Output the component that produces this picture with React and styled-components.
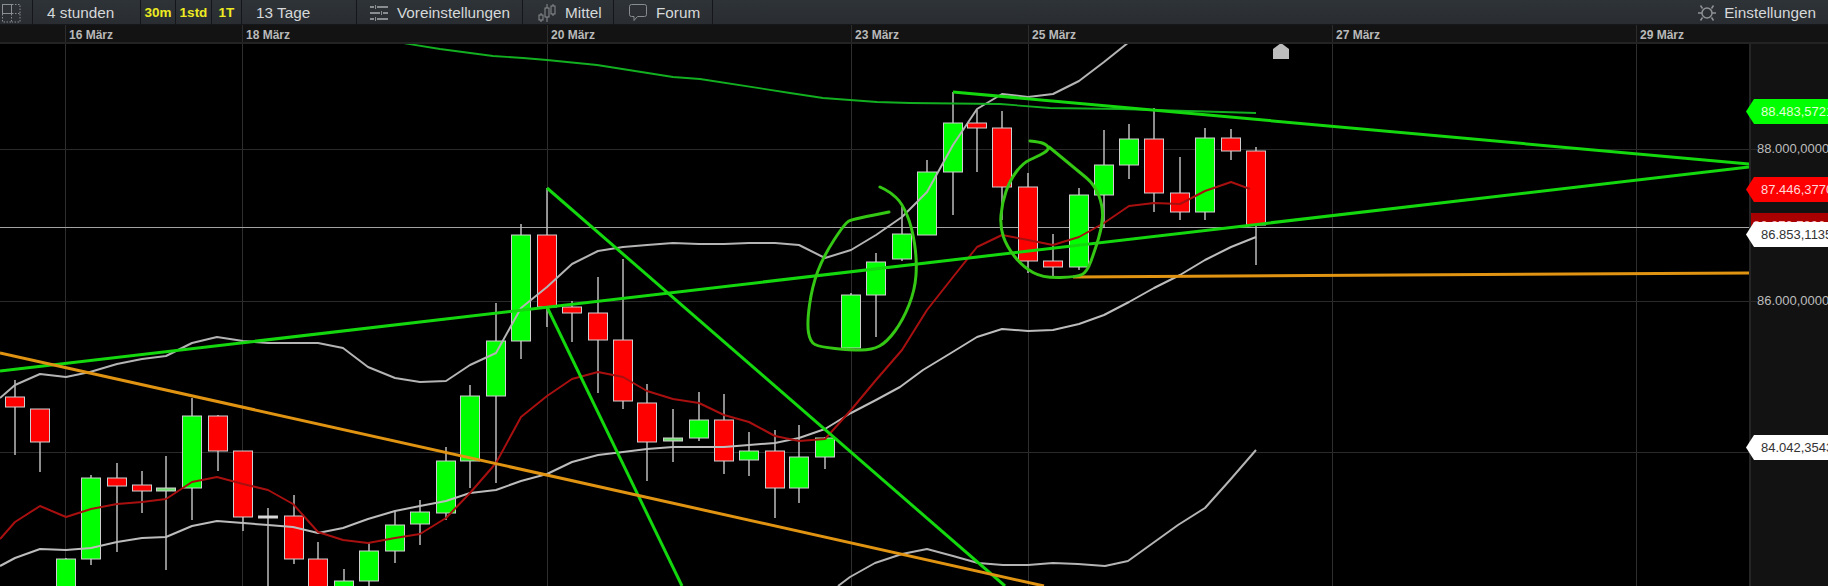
import React from 'react';
import styled, { createGlobalStyle } from 'styled-components';

const GlobalStyle = createGlobalStyle`
  html, body {
    margin: 0;
    padding: 0;
    background: #000;
    overflow: hidden;
  }
  body {
    font-family: "Liberation Sans", Arial, sans-serif;
  }
`;

const Page = styled.div`
  width: 1828px;
  height: 586px;
  display: flex;
  flex-direction: column;
  overflow: hidden;
`;

const TopBar = styled.div`
  height: 25px;
  flex: none;
  display: flex;
  background: linear-gradient(#2e3337, #292d31);
  box-shadow: inset 0 -1px 0 #15171a;
`;

const Segment = styled.div`
  width: ${(p) => p.$w}px;
  flex: none;
  box-sizing: border-box;
  display: flex;
  align-items: center;
  justify-content: ${(p) => (p.$center ? 'center' : 'flex-start')};
  gap: ${(p) => p.$gap || 0}px;
  padding-left: ${(p) => p.$pad || 0}px;
  border-right: 1px solid #14161a;
  color: #d6d8da;
  font-size: 15.3px;
`;

const Interval = styled.span`
  color: #eeea22;
  font-size: 13.5px;
  font-weight: 700;
`;

const Settings = styled.div`
  margin-left: auto;
  display: flex;
  align-items: center;
  gap: 8px;
  padding-right: 12px;
  color: #d6d8da;
  font-size: 15.3px;
`;

const TimeAxis = styled.div`
  height: 19px;
  flex: none;
  box-sizing: border-box;
  display: flex;
  background: #131313;
  border-bottom: 2px solid #232323;
`;

const Tick = styled.div`
  width: ${(p) => p.$w}px;
  flex: none;
  box-sizing: border-box;
  padding: 3px 0 0 3px;
  border-left: ${(p) => (p.$blank ? 'none' : '1px solid #2c2c2c')};
  color: #b9b9b9;
  font-size: 12px;
  font-weight: 700;
  line-height: 14px;
`;

const ChartRow = styled.div`
  flex: 1;
  display: flex;
  min-height: 0;
`;

const Plot = styled.svg`
  display: block;
  flex: none;
  width: 1749px;
  height: 542px;
  background: #000;
`;

const PriceAxis = styled.div`
  flex: 1;
  position: relative;
  background: #121212;
  border-left: 2px solid #252525;
`;

const AxisLabel = styled.div`
  position: absolute;
  left: 0;
  top: ${(p) => p.$y - 44 - 8}px;
  padding-left: 6px;
  color: #bdbdbd;
  font-size: 13px;
  line-height: 16px;
  white-space: nowrap;

  &::before {
    content: '';
    position: absolute;
    left: 0;
    top: 8px;
    width: 6px;
    height: 1px;
    background: #2a2a2a;
  }
`;

const tagColors = {
  green: { bg: '#00ff00', fg: '#e2ffd8' },
  red: { bg: '#ff0000', fg: '#ffd8d8' },
  white: { bg: '#ffffff', fg: '#333333' },
};

const PriceTag = styled.div`
  position: absolute;
  left: -5px;
  top: ${(p) => p.$y - 44}px;
  width: 84px;
  height: 25px;
  box-sizing: border-box;
  padding-left: 15px;
  clip-path: polygon(0 50%, 8px 0, 100% 0, 100% 100%, 8px 100%);
  background: ${(p) => tagColors[p.$kind].bg};
  color: ${(p) => tagColors[p.$kind].fg};
  font-size: 13px;
  line-height: 25px;
  white-space: nowrap;
`;

const HiddenPrice = styled.div`
  position: absolute;
  left: 0;
  top: ${(p) => p.$y - 44}px;
  width: 100%;
  height: 25px;
  padding-left: 2px;
  box-sizing: border-box;
  overflow: hidden;
  background: #a80000;
  color: #ffb8b8;
  font-size: 13px;
  line-height: 25px;
  white-space: nowrap;
`;

// x, wick top, body top, body bottom, wick bottom, colour
const candles = [
  [15, 380, 397, 407, 455, 'r'],
  [40, 409, 409, 442, 472, 'r'],
  [66, 558, 559, 600, 600, 'g'],
  [91, 475, 478, 559, 565, 'g'],
  [117, 463, 478, 486, 552, 'r'],
  [142, 471, 485, 491, 513, 'r'],
  [166, 456, 488, 491, 570, 'p'],
  [192, 398, 416, 488, 520, 'g'],
  [218, 415, 416, 451, 471, 'r'],
  [243, 451, 451, 517, 531, 'r'],
  [268, 508, 516, 518, 600, 'w'],
  [294, 495, 516, 559, 564, 'r'],
  [318, 542, 559, 600, 600, 'r'],
  [344, 569, 581, 600, 600, 'g'],
  [369, 543, 551, 581, 590, 'g'],
  [395, 511, 525, 551, 563, 'g'],
  [420, 500, 512, 524, 545, 'g'],
  [446, 447, 461, 513, 520, 'g'],
  [470, 385, 396, 461, 488, 'g'],
  [496, 303, 341, 396, 483, 'g'],
  [521, 224, 235, 341, 359, 'g'],
  [547, 188, 235, 307, 327, 'r'],
  [572, 301, 307, 313, 342, 'r'],
  [598, 277, 313, 340, 393, 'r'],
  [623, 259, 340, 401, 409, 'r'],
  [647, 384, 403, 442, 481, 'r'],
  [673, 409, 438, 441, 462, 'p'],
  [699, 392, 420, 438, 441, 'g'],
  [724, 394, 420, 461, 474, 'r'],
  [749, 432, 451, 460, 476, 'g'],
  [775, 430, 451, 488, 518, 'r'],
  [799, 425, 457, 488, 503, 'g'],
  [825, 437, 438, 457, 469, 'g'],
  [851, 293, 295, 348, 348, 'g'],
  [876, 253, 262, 295, 337, 'g'],
  [902, 207, 234, 259, 261, 'g'],
  [927, 160, 172, 235, 235, 'g'],
  [953, 92, 123, 172, 215, 'g'],
  [977, 110, 123, 128, 172, 'r'],
  [1002, 111, 128, 187, 220, 'r'],
  [1028, 173, 187, 261, 273, 'r'],
  [1053, 234, 261, 267, 278, 'r'],
  [1079, 188, 195, 267, 270, 'g'],
  [1104, 130, 165, 195, 228, 'g'],
  [1129, 124, 139, 165, 179, 'g'],
  [1154, 108, 139, 193, 212, 'r'],
  [1180, 157, 193, 212, 220, 'r'],
  [1205, 128, 138, 212, 220, 'g'],
  [1231, 129, 138, 151, 160, 'r'],
  [1256, 147, 151, 225, 265, 'r'],
];

const candleFill = { r: '#ff0000', g: '#00ff00', p: '#70e070', w: '#e0e0e0' };

const upperBand = '0,398 15,385 40,374 66,377 90,372 117,364 142,359 166,356 192,343 217,337 243,341 268,343 293,343 318,343 343,348 368,367 395,378 420,382 446,381 470,365 496,353 521,308 547,287 572,264 598,251 623,247 647,245 673,243 699,244 724,244 749,243 775,243 799,245 825,258 851,250 876,235 902,217 927,192 953,145 977,109 1002,94 1028,97 1053,94 1079,81 1104,62 1129,42';
const lowerBand = '0,566 15,558 40,549 66,550 91,548 117,542 142,538 166,537 192,526 217,521 243,523 268,525 293,527 318,533 343,528 368,519 395,511 420,506 446,501 470,493 496,490 521,481 547,474 572,462 598,455 623,452 647,449 673,447 699,447 724,447 749,445 775,443 799,438 825,429 851,413 876,400 900,387 923,370 951,353 977,337 1002,329 1028,331 1053,330 1079,324 1104,315 1129,302 1154,288 1180,275 1205,260 1231,247 1256,237';
const bottomBand = '838,586 850,577 875,563 902,554 927,549 953,556 978,563 1003,565 1028,565 1053,563 1078,564 1105,566 1128,561 1153,543 1178,525 1205,508 1230,480 1256,450';
const movingAverage = '0,539 15,522 40,506 66,517 91,509 117,504 142,502 166,499 192,482 217,477 243,484 268,490 293,504 318,532 343,540 368,543 395,538 420,534 446,518 470,493 496,463 521,417 547,396 572,379 598,372 623,377 647,391 673,399 699,403 724,415 749,422 775,436 799,441 825,439 851,410 876,380 902,350 927,310 953,277 977,247 1002,235 1028,240 1053,245 1079,237 1104,223 1129,206 1154,203 1180,204 1205,191 1231,182 1250,189';
const thinGreen = '403,43 440,49 493,56 523,58 547,60 597,65 673,77 700,79 790,93 823,98 877,102 910,103 1000,104 1050,108 1120,109 1256,113';

const circleLeft = [[889, 212], [853, 219], [845, 223], [823, 257], [812, 287], [807, 323], [810, 342], [820, 347], [850, 350], [872, 350], [887, 342], [903, 320], [915, 290], [917, 260], [912, 227], [902, 203], [890, 192], [880, 187]];
const circleRight = [[1030, 141], [1040, 142], [1047, 145], [1049, 149], [1044, 153], [1036, 157], [1023, 163], [1010, 180], [1002, 203], [1000, 227], [1007, 247], [1023, 267], [1043, 278], [1077, 277], [1087, 272], [1095, 250], [1102, 227], [1103, 207], [1095, 185], [1077, 170], [1049, 147]];

// midpoint quadratics, enough for the hand drawn circles
const smooth = (pts) => {
  let d = `M${pts[0][0]} ${pts[0][1]}`;
  for (let i = 1; i < pts.length - 1; i++) {
    const mx = (pts[i][0] + pts[i + 1][0]) / 2;
    const my = (pts[i][1] + pts[i + 1][1]) / 2;
    d += ` Q${pts[i][0]} ${pts[i][1]} ${mx} ${my}`;
  }
  const last = pts[pts.length - 1];
  return `${d} L${last[0]} ${last[1]}`;
};

const gridX = [65, 242, 547, 851, 1028, 1332, 1636];
const gridY = [149, 301, 452];

const GridIcon = () => (
  <svg width="20" height="20" viewBox="0 0 20 20" fill="none" stroke="#8b8f92">
    <rect x="1.5" y="1.5" width="9" height="9" />
    <path d="M11 1.5h8v8.5M19 11v8h-8M10 19H1.5v-8" strokeDasharray="1.5 1.5" />
    <path d="M10.5 11v8M11 10.5h8" strokeDasharray="1.5 1.5" />
  </svg>
);

const SlidersIcon = () => (
  <svg width="18" height="16" viewBox="0 0 18 16" fill="none" stroke="#8a8d90" strokeWidth="2">
    <path d="M0 2h4M7 2h11M0 8h10M13 8h5M0 14h4M7 14h11" />
    <path d="M5.5 0v4M11.5 6v4M5.5 12v4" strokeWidth="1" />
  </svg>
);

const CandleIcon = () => (
  <svg width="18" height="18" viewBox="0 0 18 18" fill="none" stroke="#8a8d90">
    <path d="M3 9v9M9 0v18M15 0v12" />
    <rect x="1" y="11" width="4" height="5" fill="#2c3034" />
    <rect x="7" y="4" width="4" height="9" fill="#2c3034" />
    <rect x="13" y="2" width="4" height="8" fill="#2c3034" />
  </svg>
);

const CommentIcon = () => (
  <svg width="18" height="17" viewBox="0 0 18 17" fill="none" stroke="#8a8d90">
    <path d="M2.5 0.5h13a2 2 0 0 1 2 2v8a2 2 0 0 1-2 2H8.5l-3.5 4v-4H2.5a2 2 0 0 1-2-2v-8a2 2 0 0 1 2-2z" />
  </svg>
);

const GearIcon = () => (
  <svg width="18" height="18" viewBox="0 0 18 18" fill="none" stroke="#8f9396" strokeWidth="1.5">
    <circle cx="9" cy="9" r="5" />
    <path d="M0 9h4M14 9h4M4.5 4.5L2.5 1.5M13.5 4.5l2-3M4.5 13.5l-2 3M13.5 13.5l2 3" />
  </svg>
);

const Candle = ({ x, wickTop, top, bottom, wickBottom, kind }) => (
  <g>
    <line x1={x} x2={x} y1={wickTop} y2={wickBottom} stroke="#bdbdbd" strokeWidth="1.5" />
    <rect x={x - 9.5} y={top} width="19" height={bottom - top} fill={candleFill[kind]} stroke="#cfcfcf" />
  </g>
);

const ticks = [
  { w: 65, blank: true },
  { w: 177, label: '16 März' },
  { w: 305, label: '18 März' },
  { w: 304, label: '20 März' },
  { w: 177, label: '23 März' },
  { w: 304, label: '25 März' },
  { w: 304, label: '27 März' },
  { w: 192, label: '29 März' },
];

export default function App() {
  return (
    <Page>
      <GlobalStyle />
      <TopBar>
        <Segment $w={33} $pad={1}><GridIcon /></Segment>
        <Segment $w={108} $pad={14}>4 stunden</Segment>
        <Segment $w={35} $center><Interval>30m</Interval></Segment>
        <Segment $w={36} $center><Interval>1std</Interval></Segment>
        <Segment $w={30} $center><Interval>1T</Interval></Segment>
        <Segment $w={115} $pad={14}>13 Tage</Segment>
        <Segment $w={166} $pad={13} $gap={9}><SlidersIcon />Voreinstellungen</Segment>
        <Segment $w={91} $pad={15} $gap={9}><CandleIcon />Mittel</Segment>
        <Segment $w={99} $pad={15} $gap={9}><CommentIcon />Forum</Segment>
        <Settings><GearIcon />Einstellungen</Settings>
      </TopBar>

      <TimeAxis>
        {ticks.map((t) => (
          <Tick key={t.w + (t.label || '')} $w={t.w} $blank={t.blank}>{t.label}</Tick>
        ))}
      </TimeAxis>

      <ChartRow>
        <Plot viewBox="0 44 1749 542">
          {gridX.map((x) => (
            <line key={x} x1={x + 0.5} x2={x + 0.5} y1="44" y2="586" stroke="#2e2e2e" />
          ))}
          {gridY.map((y) => (
            <line key={y} x1="0" x2="1749" y1={y + 0.5} y2={y + 0.5} stroke="#2a2a2a" />
          ))}
          <line x1="0" x2="1749" y1="227.5" y2="227.5" stroke="#a4a4a4" />

          {candles.map(([x, wickTop, top, bottom, wickBottom, kind]) => (
            <Candle key={x} x={x} wickTop={wickTop} top={top} bottom={bottom} wickBottom={wickBottom} kind={kind} />
          ))}

          <g fill="none" strokeLinejoin="round">
            <polyline points={upperBand} stroke="#b4b4b4" strokeWidth="2" />
            <polyline points={lowerBand} stroke="#bcbcbc" strokeWidth="2" />
            <polyline points={bottomBand} stroke="#b4b4b4" strokeWidth="2" />
            <polyline points={movingAverage} stroke="#a81010" strokeWidth="2" />
            <polyline points={thinGreen} stroke="#12b020" strokeWidth="1.8" />

            <line x1="0" y1="371" x2="1749" y2="167" stroke="#14d80e" strokeWidth="3" />
            <line x1="953" y1="92" x2="1749" y2="164" stroke="#14d80e" strokeWidth="3" />
            <line x1="547" y1="188" x2="1005" y2="586" stroke="#14d80e" strokeWidth="3" />
            <line x1="547" y1="307" x2="682" y2="586" stroke="#14d80e" strokeWidth="3" />
            <line x1="0" y1="353" x2="1044" y2="586" stroke="#e09412" strokeWidth="3" />
            <line x1="1073" y1="277" x2="1749" y2="273" stroke="#e09412" strokeWidth="3" />

            <path d={smooth(circleLeft)} stroke="#34c814" strokeWidth="3" strokeLinecap="round" />
            <path d={smooth(circleRight)} stroke="#34c814" strokeWidth="3" strokeLinecap="round" />
          </g>

          <polygon points="1273,49 1281,43 1289,49 1289,59 1273,59" fill="#bcbcbc" />
        </Plot>

        <PriceAxis>
          <AxisLabel $y={149}>88.000,0000</AxisLabel>
          <AxisLabel $y={301}>86.000,0000</AxisLabel>
          <PriceTag $kind="green" $y={99}>88.483,5721</PriceTag>
          <PriceTag $kind="red" $y={177}>87.446,3770</PriceTag>
          <HiddenPrice $y={213}>86.872,7896</HiddenPrice>
          <PriceTag $kind="white" $y={222}>86.853,1135</PriceTag>
          <PriceTag $kind="white" $y={435}>84.042,3543</PriceTag>
        </PriceAxis>
      </ChartRow>
    </Page>
  );
}
